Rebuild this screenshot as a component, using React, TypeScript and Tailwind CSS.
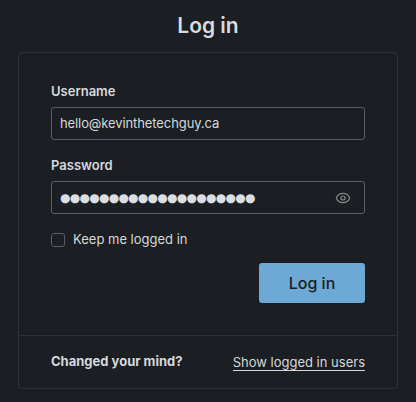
import { Eye } from "lucide-react";

export default function App() {
  return (
    <div className="h-[402px] w-[416px] overflow-hidden bg-[#1b1e22] px-[18px] font-['Inter',sans-serif] text-[#d6d9dc]">
      <h1 className="flex h-[52px] items-center justify-center text-[21px] font-semibold text-[#d8dbde]">Log in</h1>
      <div className="h-[337px] rounded border border-[#2e3236] bg-[#1b1e22]">
        <form className="flex flex-col px-[32px] pt-[28px]">
          <label className="h-[26px] text-[13px] leading-[20px] font-semibold">Username</label>
          <div className="flex h-[33px] w-[314px] items-center rounded-[3px] border border-[#5a5e63] px-2 text-[13px] tracking-[-0.1px]">
            hello@kevinthetechguy.ca
          </div>
          <label className="mt-[15px] h-[26px] text-[13px] leading-[20px] font-semibold">Password</label>
          <div className="flex h-[33px] w-[314px] items-center justify-between rounded-[3px] border border-[#5a5e63] pr-[13px] pl-2">
            <span className="font-['DejaVu_Sans',sans-serif] text-[12px] leading-none tracking-[-0.74px] text-[#dcdfe2]">●●●●●●●●●●●●●●●●●●●●</span>
            <Eye className="h-4 w-4 text-[#85888b]" strokeWidth={1.8} />
          </div>
          <label className="mt-[18px] flex h-[16px] items-center text-[13px]">
            <span className="h-[14px] w-[14px] rounded-[3px] border border-[#5a5e63]" />
            <span className="ml-[8px]">Keep me logged in</span>
          </label>
          <div className="mt-[15px] flex justify-end">
            <button type="button" className="h-[40px] w-[106px] rounded-[3px] bg-[#6ea8d4] text-base font-medium text-[#1b1e22]">Log in</button>
          </div>
        </form>
        <div className="mt-[32px] flex h-[53px] items-center justify-between border-t border-[#2e3236] px-[32px] text-[13px]">
          <span className="font-bold">Changed your mind?</span>
          <a className="border-b border-[#d6d9dc] leading-[16px]">Show logged in users</a>
        </div>
      </div>
    </div>
  );
}
